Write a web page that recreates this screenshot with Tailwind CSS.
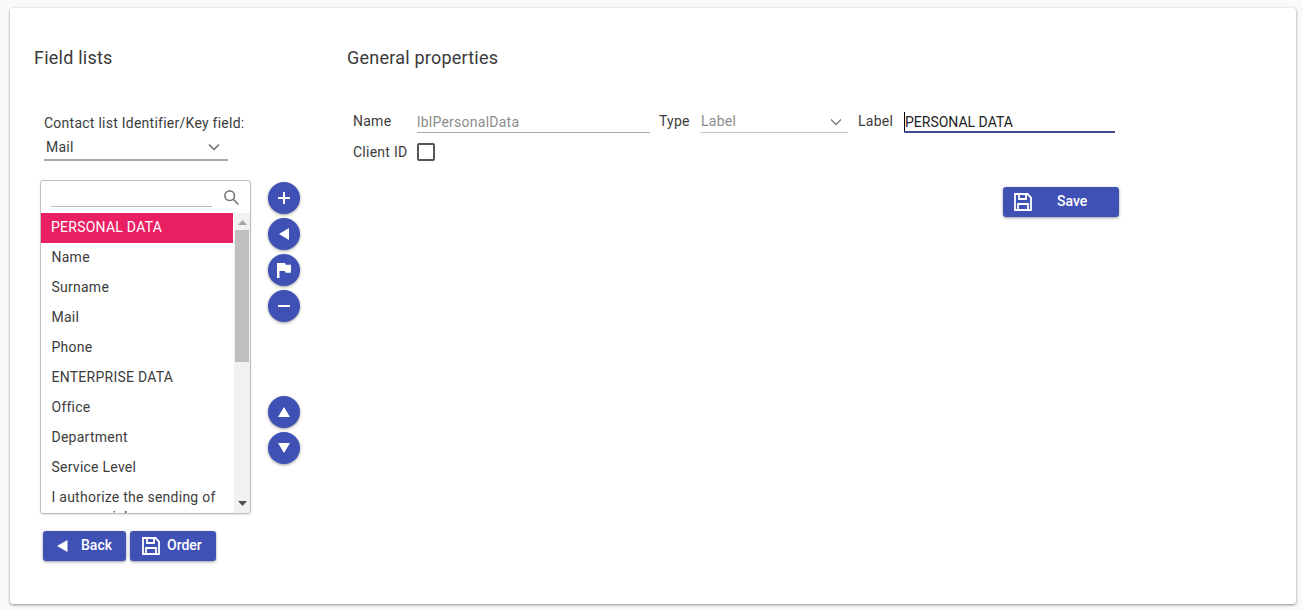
<!DOCTYPE html>
<html lang="en">
<head>
<meta charset="UTF-8">
<title>Field lists</title>
<script src="https://cdn.jsdelivr.net/npm/@tailwindcss/browser@4"></script>
</head>
<body class="bg-[#fafafa] font-['Roboto',sans-serif] text-[14px] text-[#3c3c3c] tracking-[0.25px] overflow-hidden">
<div class="w-[1303px] h-[610px] pt-[8px] pl-[10px]">
  <div class="w-[1286px] h-[596px] bg-white rounded-[3px] shadow-[0_1px_3px_rgba(0,0,0,0.45)] flex">

    <!-- left column -->
    <div class="w-[337px] shrink-0 pl-[24px]">
      <h2 class="text-[18px] leading-[24px] mt-[38px] text-[#3a3a3a] tracking-[0.22px]">Field lists</h2>
      <div class="ml-[10px] mt-[43px] leading-[20px]">Contact list Identifier/Key field:</div>
      <div class="ml-[10px] mt-[2px] w-[184px] h-[26px] border-b-2 border-[#a8a8a8] flex items-center justify-between pl-[2px] pr-[8px]">
        <span>Mail</span>
        <svg width="12" height="8" viewBox="0 0 12 8" fill="none" stroke="#666" stroke-width="1.4"><path d="M1 1.500l5 5 5-5"/></svg>
      </div>
      <div class="flex mt-[19px] ml-[6px]">
        <div class="w-[211px] h-[334px] border border-[#bdbdbd] rounded-[3px] overflow-hidden shrink-0 shadow-[0_1px_2px_rgba(0,0,0,0.12)]">
          <div class="h-[32px] flex pl-[10px] pr-[9px] relative">
            <div class="w-[161px] h-[26px] border-b border-[#bdbdbd]"></div>
            <svg class="ml-[11px] mt-[8px]" width="17" height="17" viewBox="0 0 17 17" fill="none" stroke="#7d7d7d" stroke-width="1.7"><circle cx="6.700" cy="6.700" r="4.800"/><path d="M10.200 10.200l5.300 5.300"/></svg>
          </div>
          <div class="flex h-[300px]">
            <div class="w-[192px] overflow-hidden shrink-0">
              <div class="h-[30px] pl-[10px] pb-[2px] flex items-center bg-[#e91e63] text-white">PERSONAL DATA</div>
              <div class="h-[30px] pl-[10.500px] pb-[2px] flex items-center">Name</div>
              <div class="h-[30px] pl-[10.500px] pb-[2px] flex items-center">Surname</div>
              <div class="h-[30px] pl-[10.500px] pb-[2px] flex items-center">Mail</div>
              <div class="h-[30px] pl-[10.500px] pb-[2px] flex items-center">Phone</div>
              <div class="h-[30px] pl-[10.500px] pb-[2px] flex items-center">ENTERPRISE DATA</div>
              <div class="h-[30px] pl-[10.500px] pb-[2px] flex items-center">Office</div>
              <div class="h-[30px] pl-[10.500px] pb-[2px] flex items-center">Department</div>
              <div class="h-[30px] pl-[10.500px] pb-[2px] flex items-center">Service Level</div>
              <div class="pl-[10.500px] pt-[4px] leading-[20px]">I authorize the sending of commercial</div>
            </div>
            <div class="w-[17px] ml-[1px] bg-[#f1f1f1] flex flex-col items-center">
              <svg class="mt-[7px]" width="9" height="5" viewBox="0 0 9 5" fill="#a3a3a3"><path d="M4.500 0L9 5H0z"/></svg>
              <div class="w-[14px] h-[132px] bg-[#bfbfbf] mt-[5px]"></div>
              <svg class="mt-[139px]" width="9" height="5" viewBox="0 0 9 5" fill="#505050"><path d="M0 0h9L4.500 5z"/></svg>
            </div>
          </div>
        </div>

        <div class="ml-[17px] mt-[2px] flex flex-col">
          <button class="w-[32px] h-[32px] rounded-full bg-[#3f51b5] flex items-center justify-center shadow-[0_1px_3px_rgba(0,0,0,0.4)]">
            <svg width="12" height="12" viewBox="0 0 12 12" stroke="#fff" stroke-width="2"><path d="M6 0v12M0 6h12"/></svg>
          </button>
          <button class="w-[32px] h-[32px] mt-[4px] rounded-full bg-[#3f51b5] flex items-center justify-center shadow-[0_1px_3px_rgba(0,0,0,0.4)]">
            <svg width="11" height="12" viewBox="0 0 11 12" fill="#fff"><path d="M0 6L10 0v12z"/></svg>
          </button>
          <button class="w-[32px] h-[32px] mt-[4px] rounded-full bg-[#3f51b5] flex items-center justify-center shadow-[0_1px_3px_rgba(0,0,0,0.4)]">
            <svg width="14" height="15" viewBox="0 0 14 15" fill="#fff"><path d="M0 0h8l.6 1.800H14v8H8.500l-.6-1.800H2.500V15H0z"/></svg>
          </button>
          <button class="w-[32px] h-[32px] mt-[4px] rounded-full bg-[#3f51b5] flex items-center justify-center shadow-[0_1px_3px_rgba(0,0,0,0.4)]">
            <svg width="12" height="2" viewBox="0 0 12 2" fill="#fff"><path d="M0 0h12v2H0z"/></svg>
          </button>
          <button class="w-[32px] h-[32px] mt-[74px] rounded-full bg-[#3f51b5] flex items-center justify-center shadow-[0_1px_3px_rgba(0,0,0,0.4)]">
            <svg width="12" height="10" viewBox="0 0 12 10" fill="#fff"><path d="M6 0l6 10H0z"/></svg>
          </button>
          <button class="w-[32px] h-[32px] mt-[4px] rounded-full bg-[#3f51b5] flex items-center justify-center shadow-[0_1px_3px_rgba(0,0,0,0.4)]">
            <svg width="12" height="10" viewBox="0 0 12 10" fill="#fff"><path d="M0 0h12L6 10z"/></svg>
          </button>
        </div>
      </div>
      <div class="flex ml-[9px] mt-[17px] gap-[4px]">
        <button class="w-[83px] h-[30px] rounded-[3px] bg-[#3f51b5] text-white font-medium tracking-normal flex items-center pl-[14px] shadow-[0_1px_3px_rgba(0,0,0,0.4)]">
          <svg width="11" height="12" viewBox="0 0 11 12" fill="#fff"><path d="M0 6L10.500 0v12z"/></svg>
          <span class="ml-[13px] mb-[2px]">Back</span>
        </button>
        <button class="w-[86px] h-[30px] rounded-[3px] bg-[#3f51b5] text-white font-medium tracking-normal flex items-center pl-[12px] shadow-[0_1px_3px_rgba(0,0,0,0.4)]">
          <svg width="18" height="18" viewBox="0 0 18 18" fill="none" stroke="#fff" stroke-width="1.800"><path d="M1 1h12.500L17 4.500V17H1z"/><path d="M5 1v5h7V1M4 17v-6h10v6"/></svg>
          <span class="ml-[7px] mb-[2px]">Order</span>
        </button>
      </div>
    </div>

    <!-- right column -->
    <div class="flex-1">
      <h2 class="text-[18px] leading-[24px] mt-[38px] text-[#3a3a3a] tracking-[0.22px]">General properties</h2>
      <div class="flex mt-[41px] ml-[6px] h-[24px] items-start">
        <span class="w-[64px] leading-[20px]">Name</span>
        <div class="w-[233px] h-[22px] border-b border-[#a8a8a8] text-[#8c8c8c] leading-[20px] pt-[1px]">lblPersonalData</div>
        <span class="w-[41px] ml-[9px] leading-[20px]">Type</span>
        <div class="w-[148px] h-[22px] border-b border-[#c4c4c4] text-[#8c8c8c] leading-[20px] flex justify-between pl-[1px] pr-[6px]">
          <span>Label</span>
          <svg class="mt-[7px]" width="12" height="8" viewBox="0 0 12 8" fill="none" stroke="#777" stroke-width="1.300"><path d="M1 1.500l5 5 5-5"/></svg>
        </div>
        <span class="w-[46px] ml-[10px] leading-[20px]">Label</span>
        <div class="w-[211px] h-[22px] border-b-2 border-[#3f4d8f] text-[#222] leading-[20px] relative pl-[1px] pt-[1px] tracking-normal">
          <span class="absolute left-0 top-[1px] w-px h-[19px] bg-black"></span>PERSONAL DATA
        </div>
      </div>
      <div class="flex items-center ml-[6px] mt-[8px] h-[18px]">
        <span class="w-[64px]">Client ID</span>
        <div class="w-[18px] h-[18px] border-2 border-[#555] rounded-[2px]"></div>
      </div>
      <div class="ml-[656px] mt-[26px]">
        <button class="w-[116px] h-[30px] rounded-[3px] bg-[#3f51b5] text-white font-medium tracking-normal flex items-center pl-[11px] shadow-[0_1px_3px_rgba(0,0,0,0.4)]">
          <svg width="18" height="18" viewBox="0 0 18 18" fill="none" stroke="#fff" stroke-width="1.800"><path d="M1 1h12.500L17 4.500V17H1z"/><path d="M5 1v5h7V1M4 17v-6h10v6"/></svg>
          <span class="ml-[25px] mb-[2px]">Save</span>
        </button>
      </div>
    </div>
  </div>
</div>
</body>
</html>
